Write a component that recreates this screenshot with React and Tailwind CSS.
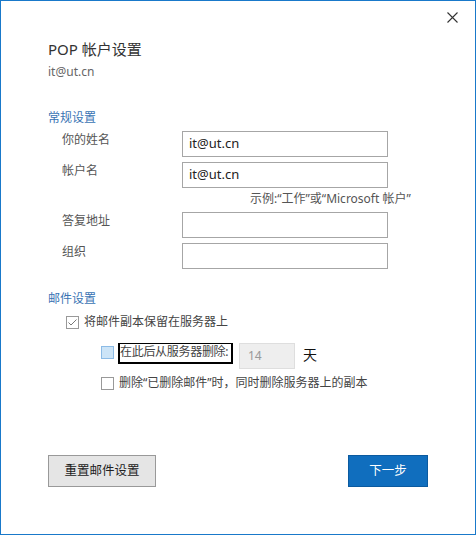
import React from 'react';

const fieldRows = [
  { label: '你的姓名', value: 'it@ut.cn' },
  { label: '帐户名', value: 'it@ut.cn', hint: true },
  { label: '答复地址', value: '' },
  { label: '组织', value: '' },
];

const Field = ({ label, value }) => (
  <div className="flex items-start">
    <div className="w-[134px] pl-[14px] pt-[1px] leading-[16px] text-[#555]">{label}</div>
    <div className="w-[206px] h-[26px] border border-[#a6a6a6] flex items-center px-[6px] text-[13px] text-[#222]">
      {value}
    </div>
  </div>
);

const App = () => {
  return (
    <div className="w-[476px] h-[535px] bg-white border border-[#1979ca] flex flex-col text-[12px] font-['Noto_Sans','Noto_Sans_CJK_SC',sans-serif]">
      {/* Close */}
      <div className="h-[30px] flex justify-end pt-[11px] pr-[17px]">
        <svg width="11" height="11" viewBox="0 0 11 11">
          <path d="M0.5 0.5 L10.5 10.5 M10.5 0.5 L0.5 10.5" stroke="#333" strokeWidth="1.1" fill="none" />
        </svg>
      </div>

      <div className="pl-[47px] pr-[47px] flex flex-col">
        <h1 className="mt-[8px] text-[15px] leading-[20px] text-[#333]">POP 帐户设置</h1>
        <p className="mt-[5px] leading-[16px] text-[#666]">it@ut.cn</p>

        {/* 常规设置 */}
        <h2 className="mt-[30px] leading-[16px] text-[#3a74b4]">常规设置</h2>
        <div className="mt-[5px] flex flex-col">
          <Field {...fieldRows[0]} />
          <div className="mt-[5px]">
            <Field {...fieldRows[1]} />
          </div>
          <p className="mt-[3px] ml-[202px] leading-[16px] text-[#555] whitespace-nowrap">
            示例:“工作”或“Microsoft 帐户”
          </p>
          <div className="mt-[5px]">
            <Field {...fieldRows[2]} />
          </div>
          <div className="mt-[5px]">
            <Field {...fieldRows[3]} />
          </div>
        </div>

        {/* 邮件设置 */}
        <h2 className="mt-[22px] leading-[16px] text-[#3a74b4]">邮件设置</h2>
        <label className="mt-[7px] ml-[18px] flex items-center gap-[5px] leading-[16px] text-[#444]">
          <span className="w-[13px] h-[13px] border border-[#999] flex items-center justify-center">
            <svg width="11" height="11" viewBox="0 0 11 11">
              <polyline points="1.5,5.5 4,8 9.5,2.5" stroke="#777" strokeWidth="1" fill="none" />
            </svg>
          </span>
          将邮件副本保留在服务器上
        </label>

        <div className="mt-[13px] ml-[53px] flex items-start">
          <span className="mt-[3px] w-[13px] h-[13px] border border-[#8cbbe6] bg-[#cce4f7]"></span>
          <span className="ml-[4px] w-[115px] h-[21px] border-2 border-t border-black leading-[16px] tracking-[-0.3px] text-[#444] whitespace-nowrap">
            在此后从服务器删除:
          </span>
          <div className="ml-[6px] w-[56px] h-[26px] bg-[#eeeeee] border border-[#dedede] flex items-center pl-[8px] text-[#999]">
            14
          </div>
          <span className="ml-[8px] mt-[3px] text-[14px] leading-[18px] text-[#111]">天</span>
        </div>

        <label className="mt-[6px] ml-[53px] flex items-center gap-[5px] leading-[16px] text-[#444]">
          <span className="w-[13px] h-[13px] border border-[#999] bg-white"></span>
          删除“已删除邮件”时，同时删除服务器上的副本
        </label>

        {/* Buttons */}
        <div className="mt-[64px] flex justify-between">
          <button className="w-[108px] h-[32px] bg-[#e5e5e5] border border-[#999] text-[12.5px] text-[#222]">
            重置邮件设置
          </button>
          <button className="w-[80px] h-[32px] bg-[#106ebe] border border-[#0b5a9f] text-[12.5px] text-white">
            下一步
          </button>
        </div>
      </div>
    </div>
  );
};

export default App;
